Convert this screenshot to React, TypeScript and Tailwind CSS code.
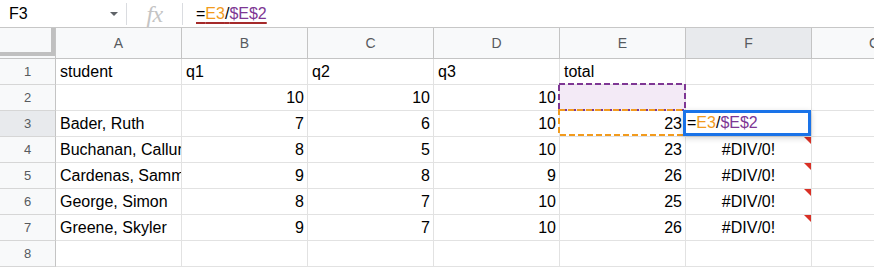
import React from 'react';

const cols = ['A', 'B', 'C', 'D', 'E', 'F', 'G'];

type Row = { n: number; a: string; b: string; c: string; d: string; e: string; f: string };

const rows: Row[] = [
  { n: 1, a: 'student', b: 'q1', c: 'q2', d: 'q3', e: 'total', f: '' },
  { n: 2, a: '', b: '10', c: '10', d: '10', e: '', f: '' },
  { n: 3, a: 'Bader, Ruth', b: '7', c: '6', d: '10', e: '23', f: '' },
  { n: 4, a: 'Buchanan, Callum', b: '8', c: '5', d: '10', e: '23', f: '#DIV/0!' },
  { n: 5, a: 'Cardenas, Sammy', b: '9', c: '8', d: '9', e: '26', f: '#DIV/0!' },
  { n: 6, a: 'George, Simon', b: '8', c: '7', d: '10', e: '25', f: '#DIV/0!' },
  { n: 7, a: 'Greene, Skyler', b: '9', c: '7', d: '10', e: '26', f: '#DIV/0!' },
  { n: 8, a: '', b: '', c: '', d: '', e: '', f: '' },
];

const isNum = (s: string) => /^\d+$/.test(s);

const Formula = () => (
  <>
    <span>=</span>
    <span className="text-[#f29b1e]">E3</span>
    <span>/</span>
    <span className="text-[#7e3794]">$E$2</span>
  </>
);

// dashed "copy" style outline drawn over a referenced cell
const Dashed = ({ color, h }: { color: string; h: number }) => (
  <svg className="absolute left-[-2px] top-[-2px] pointer-events-none" width={128} height={h + 2}>
    <rect x={1} y={1} width={126} height={h} fill="none" stroke={color} strokeWidth={2} strokeDasharray="6 3" />
  </svg>
);

const Cell = ({ value, col, row }: { value: string; col: string; row: number }) => {
  const num = isNum(value) && row > 1;
  const err = value.startsWith('#');
  let bg = 'bg-white';
  if (col === 'E' && row === 2) bg = 'bg-[#f3eaf6]';
  return (
    <div
      className={`relative w-[126px] shrink-0 h-full border-r border-b border-[#e2e2e2] flex items-center overflow-hidden whitespace-nowrap ${bg} ${
        num ? 'justify-end pr-[3px]' : err ? 'justify-center' : 'pl-[4px]'
      } ${col === 'E' && (row === 2 || row === 3) ? 'overflow-visible' : ''} ${
        col === 'F' && row === 3 ? 'overflow-visible' : ''
      }`}
    >
      {value}
      {col === 'E' && row === 2 && <Dashed color="#7e3794" h={26} />}
      {col === 'E' && row === 3 && <Dashed color="#f29b1e" h={25} />}
      {col === 'F' && row === 3 && (
        <div className="absolute z-10 left-[-3px] top-[-1px] w-[128px] h-[26px] border-[3px] border-[#1a73e8] bg-white flex items-center pl-[1px] shadow-[0_2px_6px_rgba(0,0,0,0.18)]">
          <Formula />
        </div>
      )}
      {err && (
        <div className="absolute top-0 right-0 w-0 h-0 border-l-[7px] border-l-transparent border-t-[7px] border-t-[#d93025]" />
      )}
    </div>
  );
};

export default function App() {
  return (
    <div
      className="w-[874px] h-[268px] overflow-hidden bg-white text-[16px] text-black"
      style={{ fontFamily: '"Liberation Sans", Arial, sans-serif' }}
    >
      {/* formula bar */}
      <div className="flex items-center h-[28px] border-b border-[#c7c7c7]">
        <div className="w-[126px] shrink-0 flex items-center justify-between pl-[9px] pr-[8px]">
          <span>F3</span>
          <span className="w-0 h-0 border-l-[4px] border-r-[4px] border-t-[4px] border-l-transparent border-r-transparent border-t-[#5f6368]" />
        </div>
        <div className="w-px h-[22px] bg-[#dadce0]" />
        <div className="w-[55px] shrink-0 flex justify-center">
          <span className="text-[24px] italic text-[#c4c4c4] leading-none tracking-tight" style={{ fontFamily: '"Liberation Serif", serif' }}>
            fx
          </span>
        </div>
        <div className="w-px h-[22px] bg-[#dadce0]" />
        <div className="pl-[13px]">
          <span className="underline decoration-[#a52a2a] decoration-[1.5px] underline-offset-[3px]">
            <Formula />
          </span>
        </div>
      </div>

      {/* column headers */}
      <div className="flex h-[31px] bg-[#f8f9fa] border-b border-[#c4c4c4] text-[14px] text-[#575a5e]">
        <div className="w-[56px] shrink-0 h-full border-r border-[#c4c4c4]">
          <div className="w-[55px] h-[28px] border-r-[4px] border-b-[4px] border-[#c0c0c0]" />
        </div>
        {cols.map((c) => (
          <div
            key={c}
            className={`w-[126px] shrink-0 h-full border-r border-[#c4c4c4] flex items-center justify-center ${
              c === 'F' ? 'bg-[#e8eaed]' : ''
            }`}
          >
            {c}
          </div>
        ))}
      </div>

      {/* rows */}
      {rows.map((r) => (
        <div key={r.n} className="flex h-[26px]">
          <div
            className={`w-[56px] shrink-0 h-full border-r border-[#c4c4c4] border-b border-b-[#d6d6d6] flex items-center justify-center text-[13px] text-[#575a5e] ${
              r.n === 3 ? 'bg-[#e8eaed]' : 'bg-[#f8f9fa]'
            }`}
          >
            {r.n}
          </div>
          <Cell value={r.a} col="A" row={r.n} />
          <Cell value={r.b} col="B" row={r.n} />
          <Cell value={r.c} col="C" row={r.n} />
          <Cell value={r.d} col="D" row={r.n} />
          <Cell value={r.e} col="E" row={r.n} />
          <Cell value={r.f} col="F" row={r.n} />
          <Cell value="" col="G" row={r.n} />
        </div>
      ))}
    </div>
  );
}
